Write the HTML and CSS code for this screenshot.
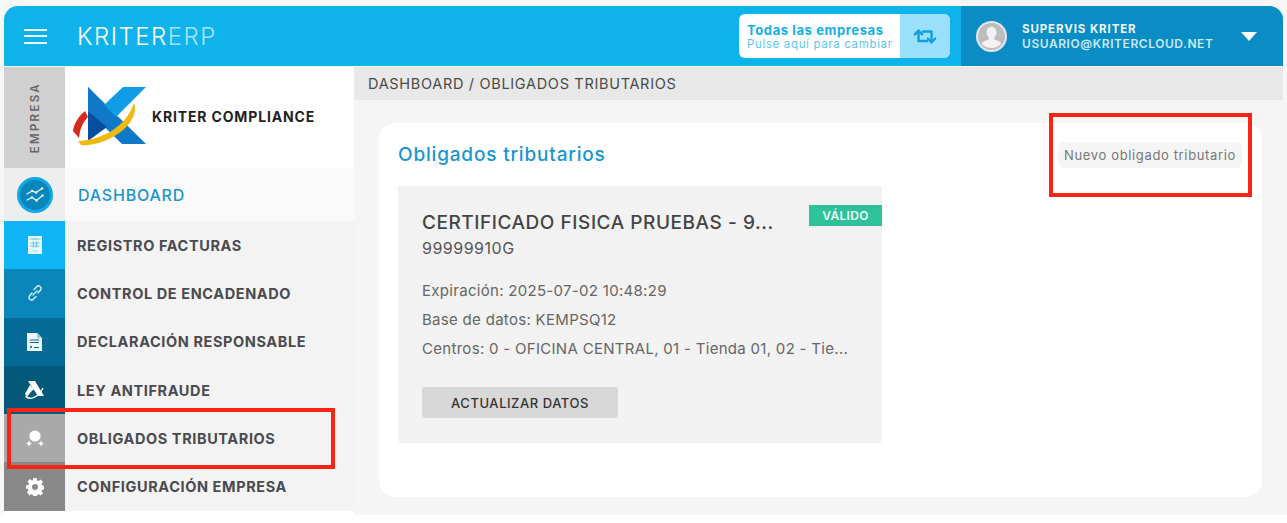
FILE: index.html
```html
<!DOCTYPE html>
<html lang="es">
<head>
<meta charset="utf-8">
<title>Obligados tributarios</title>
<link rel="stylesheet" href="styles.css">
</head>
<body>
<div class="app">
  <header class="topbar">
    <button class="burger" aria-label="Menú"><span></span><span></span><span></span></button>
    <div class="brand">KRITER<span>ERP</span></div>
    <div class="company">
      <div class="company-text">
        <strong>Todas las empresas</strong>
        <small>Pulse aquí para cambiar</small>
      </div>
      <div class="company-swap">
        <svg width="24" height="17" viewBox="0 0 24 17" fill="none" stroke="#0f9fe0" stroke-width="2.400" stroke-linecap="round" stroke-linejoin="round"><path d="M5.500 3V13H14"/><path d="M1.800 6.300 5.500 2.500 9.200 6.300"/><path d="M18.500 14V3.500H10"/><path d="M14.800 10.500 18.500 14.300 22.200 10.500"/></svg>
      </div>
    </div>
    <div class="user">
      <div class="avatar">
        <svg width="31" height="31" viewBox="0 0 30 30"><circle cx="15" cy="15" r="15" fill="#e6e6e6"/><circle cx="15" cy="15" r="13" fill="#bdbdbd"/><path d="M15 5.500c3 0 4.800 2.300 4.800 5.300 0 2.200-1 4-2.100 5.200v2c2 1 5.800 1.500 6.800 4a13 13 0 0 1-19 0c1-2.500 4.800-3 6.800-4v-2c-1.100-1.200-2.100-3-2.100-5.200 0-3 1.800-5.300 4.800-5.300z" fill="#f2f2f2"/></svg>
      </div>
      <div class="user-text">
        <strong>SUPERVIS KRITER</strong>
        <span>USUARIO@KRITERCLOUD.NET</span>
      </div>
      <div class="caret"></div>
    </div>
  </header>
  <div class="body-row">
    <aside class="sidebar">
      <div class="company-row">
        <div class="rail-label"><span>EMPRESA</span></div>
        <div class="logo-cell">
          <svg class="logo" width="78" height="66" viewBox="0 0 78 66">
            <path d="M18 2 76 59H52L18 26z" fill="#0f78c8"/>
            <path d="M34 20 53 2H76L46 32z" fill="#109de6"/>
            <path d="M18 2V26L37 42 45 32z" fill="#0f78c8"/>
            <path d="M18 26V56L37 42z" fill="#064f9e"/>
            <path d="M8 56C32 55 56 42 64 18 68 28 60 42 46 50 34 58 20 61 11 60z" fill="#f1b90f"/>
            <path d="M15 26 18 32C13 37 10 43 9 53L3 46C4 38 9 31 15 26z" fill="#d42a1c"/>
          </svg>
          <span class="logo-name">KRITER COMPLIANCE</span>
        </div>
      </div>
      <nav class="menu">
        <a class="item dash">
          <span class="ico"><span class="dash-circle">
            <svg width="18" height="16" viewBox="0 0 18 16" fill="none" stroke="#eaf7fd" stroke-width="1.200" stroke-linecap="round"><path d="M1 7 6 4 10 5.500 16 1.500"/><path d="M1 13 6 10.500 10.500 13.500 16.500 8.500"/><g fill="#eaf7fd" stroke="none"><circle cx="6" cy="4" r="1.300"/><circle cx="10" cy="5.500" r="1.300"/><circle cx="16" cy="1.500" r="1.300"/><circle cx="6" cy="10.500" r="1.300"/><circle cx="10.500" cy="13.500" r="1.300"/><circle cx="16.500" cy="8.500" r="1.300"/></g></svg>
          </span></span>
          <span class="lbl">DASHBOARD</span>
        </a>
        <a class="item c1">
          <span class="ico"><svg width="14" height="18" viewBox="0 0 14 18"><path d="M0 0h14v18H0z" fill="#e8f8ff"/><path d="M2.500 3h9" stroke="#7fd0f2" stroke-width="1.500"/><path d="M2.500 7h9M2.500 10h9M5.500 5.500v6M8.500 5.500v6" stroke="#5fc4ee" stroke-width="1"/><path d="M4 15h6" stroke="#9adcf5"/></svg></span>
          <span class="lbl">REGISTRO FACTURAS</span>
        </a>
        <a class="item c2">
          <span class="ico"><svg width="16" height="16" viewBox="0 0 16 16" fill="none" stroke="#d2eefa" stroke-width="1.400" stroke-linecap="round"><path d="M7 4.500 9.500 2a2.200 2.200 0 0 1 4 3L11 8"/><path d="M9 11.500 6.500 14a2.200 2.200 0 0 1-4-3L5 8"/><path d="M10 6 6 10"/></svg></span>
          <span class="lbl">CONTROL DE ENCADENADO</span>
        </a>
        <a class="item c3">
          <span class="ico"><svg width="15" height="18" viewBox="0 0 15 18"><path d="M0 0h10l5 5v13H0z" fill="#eef7fb"/><path d="M10 0v5h5z" fill="#9cc7dc"/><path d="M3 7h9M3 9.500h9" stroke="#0a6a97" stroke-width="1.200"/><path d="M3 13l2 1-2 1M7 14.500h5" stroke="#0a6a97" fill="none"/></svg></span>
          <span class="lbl">DECLARACIÓN RESPONSABLE</span>
        </a>
        <a class="item c4">
          <span class="ico"><svg width="21" height="19" viewBox="0 0 21 19"><path d="M4 0h7l9 15h-6z" fill="#fff"/><path d="M6 4 1 13l2.500 3C6 11 9 9 10 8z" fill="#fff"/><path d="M1.500 15c3 4 12 3 17.500-8" stroke="#fff" stroke-width="1.300" fill="none"/></svg></span>
          <span class="lbl">LEY ANTIFRAUDE</span>
        </a>
        <a class="item c5">
          <span class="ico"><svg width="18" height="17" viewBox="0 0 18 17"><circle cx="9" cy="6" r="5.600" fill="#fff"/><path d="M3 10.500 4 12.600 6 13.500 4 14.400 3 16.500 2 14.400 0 13.500 2 12.600zM15 10.500 16 12.600 18 13.500 16 14.400 15 16.500 14 14.400 12 13.500 14 12.600z" fill="#fff"/></svg></span>
          <span class="lbl">OBLIGADOS TRIBUTARIOS</span>
        </a>
        <a class="item c6">
          <span class="ico"><svg width="18" height="18" viewBox="0 0 18 18"><path fill="#fff" fill-rule="evenodd" d="M7.300 0h3.400l.4 2.400 1.500.6 2-1.400 2.400 2.400-1.400 2 .6 1.500 2.400.4v3.400l-2.400.4-.6 1.500 1.400 2-2.400 2.400-2-1.400-1.500.6-.4 2.400H7.300l-.4-2.400-1.500-.6-2 1.400L1 14.200l1.400-2-.6-1.500L0 10.700V7.300l2.400-.4.600-1.500-1.400-2L4 1l2 1.400 1-.5zM9 6a3 3 0 1 0 0 6 3 3 0 0 0 0-6z"/></svg></span>
          <span class="lbl">CONFIGURACIÓN EMPRESA</span>
        </a>
      </nav>
    </aside>
    <main class="content">
      <div class="crumbs">DASHBOARD / OBLIGADOS TRIBUTARIOS</div>
      <section class="panel">
        <div class="panel-head">
          <h1>Obligados tributarios</h1>
          <button class="new-btn">Nuevo obligado tributario</button>
        </div>
        <article class="cert">
          <span class="badge">VÁLIDO</span>
          <h2>CERTIFICADO FISICA PRUEBAS - 9...</h2>
          <p class="nif">99999910G</p>
          <p class="line first">Expiración: 2025-07-02 10:48:29</p>
          <p class="line">Base de datos: KEMPSQ12</p>
          <p class="line">Centros: 0 - OFICINA CENTRAL, 01 - Tienda 01, 02 - Tie...</p>
          <button class="refresh">ACTUALIZAR DATOS</button>
        </article>
      </section>
    </main>
  </div>
</div>
<div class="mark mark-menu"></div>
<div class="mark mark-new"></div>
</body>
</html>
```
FILE: styles.css
```css
* { box-sizing: border-box; }
html, body { margin: 0; height: 523px; overflow: hidden; }
body { background: #fff; font-family: Inter, "Liberation Sans", sans-serif; color: #444; position: relative; }
.app { height: 515px; padding: 6px 4px 0 4px; background: #f6f6f6; }
button { font-family: inherit; border: 0; padding: 0; }

.topbar { height: 60px; background: #0eb3ec; border-radius: 14px 14px 0 0; display: flex; align-items: center; overflow: hidden; }
.burger { width: 23px; height: 15px; margin-left: 20px; background: none; display: flex; flex-direction: column; justify-content: space-between; }
.burger span { display: block; height: 2px; background: #eaf8fe; }
.brand { margin-left: 30px; font-size: 24px; font-weight: 300; color: #fff; letter-spacing: 1.500px; }
.brand span { color: #a9e3fa; }
.company { margin-left: auto; width: 211px; height: 44px; border-radius: 6px; overflow: hidden; display: flex; background: #fff; }
.company-text { flex: 1; padding: 9px 0 0 8px; display: flex; flex-direction: column; white-space: nowrap; }
.company-text strong { font-size: 13px; line-height: 14px; font-weight: 700; color: #16aee8; letter-spacing: .6px; }
.company-text small { font-size: 11.500px; line-height: 14px; color: #5cc6ee; letter-spacing: .65px; }
.company-swap { width: 50px; background: #9adffc; display: flex; align-items: center; justify-content: center; }
.user { width: 322px; height: 60px; margin-left: 11px; background: #0a8dc4; display: flex; align-items: center; }
.avatar { width: 31px; height: 31px; margin-left: 15px; }
.user-text { margin-left: 15px; width: 205px; flex: none; display: flex; flex-direction: column; color: #eef9fd; white-space: nowrap; }
.user-text strong { font-size: 11.500px; line-height: 15px; font-weight: 700; letter-spacing: .9px; }
.user-text span { font-size: 12px; line-height: 14px; font-weight: 600; color: #c8ebf7; letter-spacing: .56px; }
.caret { width: 0; height: 0; margin-left: 14px; border-left: 8.500px solid transparent; border-right: 8.500px solid transparent; border-top: 9px solid #fff; }

.body-row { display: flex; margin-top: 1px; height: 448px; }
.sidebar { width: 350px; flex: none; background: #fff; }
.company-row { display: flex; height: 101px; }
.rail-label { width: 61px; background: #d0d0d0; display: flex; align-items: center; justify-content: center; }
.rail-label span { writing-mode: vertical-rl; transform: rotate(180deg); font-size: 11.500px; font-weight: 600; letter-spacing: 2.300px; color: #666; }
.logo-cell { flex: 1; display: flex; align-items: center; background: #fff; padding-left: 5px; }
.logo { margin: 1px 0 0 0; }
.logo-name { margin-left: 4px; margin-top: -2px; font-size: 14px; font-weight: 700; color: #222; white-space: nowrap; letter-spacing: .85px; }

.menu { display: flex; flex-direction: column; }
.item { display: flex; align-items: center; height: 48.300px; background: #f3f3f3; }
.ico { width: 61px; height: 100%; flex: none; display: flex; align-items: center; justify-content: center; }
.lbl { margin-left: 12px; font-size: 14.500px; font-weight: 700; color: #4a4a4f; letter-spacing: .6px; white-space: nowrap; }
.dash { height: 53px; background: #fafafa; }
.dash .ico { background: #eee; }
.dash .lbl { margin-left: 13px; font-size: 16px; font-weight: 500; color: #1b95ce; letter-spacing: .8px; }
.dash-circle { width: 36px; height: 36px; border-radius: 50%; background: #0a86bd; border: 3px solid #11a8e6; display: flex; align-items: center; justify-content: center; }
.c1 .ico { background: #0fb4f4; }
.c2 .ico { background: #0a86b9; }
.c3 .ico { background: #066a97; }
.c4 .ico { background: #04587a; }
.c5 .ico { background: #a9a9a9; }
.c6 .ico { background: #888; }

.content { flex: 1; background: #f5f5f5; }
.crumbs { height: 33px; padding-left: 14px; background: #e8e8e8; font-size: 14.500px; line-height: 33px; color: #4a4a4a; letter-spacing: .68px; }
.panel { margin: 23px 21px 0 25px; height: 374px; background: #fff; border-radius: 16px; padding: 0 19px; }
.panel-head { height: 63px; display: flex; align-items: center; justify-content: space-between; }
.panel-head h1 { margin: 0; font-size: 19px; font-weight: 500; color: #1b95ce; letter-spacing: .82px; }
.new-btn { height: 26px; width: 184px; background: #f5f5f5; border-radius: 6px; font-size: 13px; color: #777; letter-spacing: .64px; white-space: nowrap; margin-right: 1px; }
.cert { position: relative; width: 484px; height: 257px; background: #f2f2f2; padding: 25px 24px 0 24px; }
.badge { position: absolute; right: 0; top: 19px; width: 73px; height: 21px; background: #2ec29b; color: #eafff8; font-size: 12px; font-weight: 600; line-height: 21px; text-align: center; letter-spacing: .3px; }
.cert h2 { margin: 0; font-size: 19px; line-height: 24px; font-weight: 500; color: #444; white-space: nowrap; letter-spacing: .55px; }
.nif { margin: 3px 0 0; font-size: 16px; line-height: 20px; color: #555; letter-spacing: .5px; }
.line { margin: 0; font-size: 15px; line-height: 29px; color: #666; white-space: nowrap; letter-spacing: .3px; }
.line.first { margin-top: 18px; }
.refresh { display: block; margin-top: 24px; width: 196px; height: 31px; background: #d8d8d8; border-radius: 3px; font-size: 13px; font-weight: 500; color: #333; letter-spacing: .55px; }

.mark { position: absolute; border: 4px solid #fb2414; pointer-events: none; }
.mark-menu { left: 7px; top: 408px; width: 328px; height: 61px; }
.mark-new { left: 1049px; top: 113px; width: 203px; height: 84px; }
```
